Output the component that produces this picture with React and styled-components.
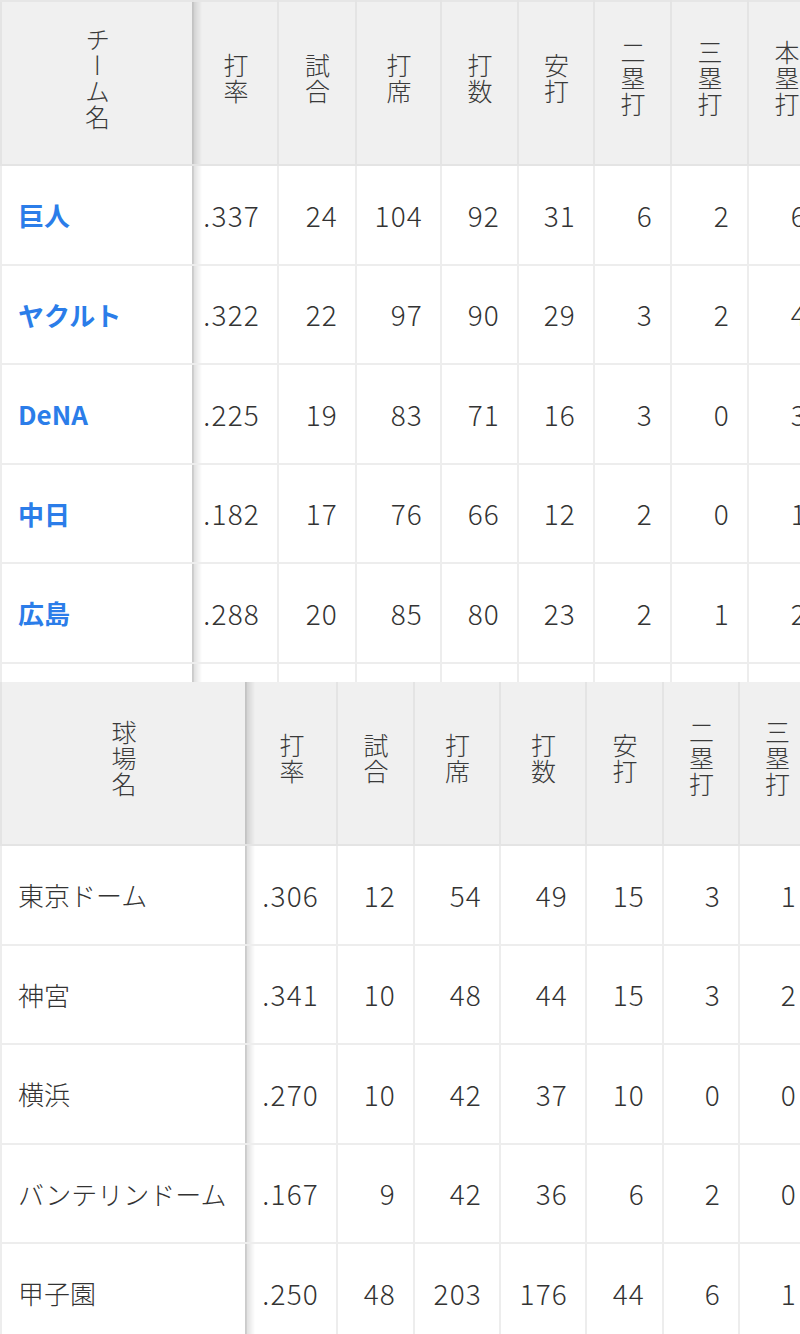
import styled, { createGlobalStyle } from 'styled-components';

const GlobalStyle = createGlobalStyle`
    html, body {
        margin: 0;
        padding: 0;
        background: #fff;
    }
    body {
        font-family: "Noto Sans CJK JP", "Noto Sans", sans-serif;
        color: #333;
    }
`

const teamCols = [192, 85, 78, 85, 77, 76, 77, 77, 77, 77, 77, 77];
const teamHeads = ['打率', '試合', '打席', '打数', '安打', '二塁打', '三塁打', '本塁打', '打点', '盗塁', '三振'];
const teamRows = [
    ['巨人', '.337', 24, 104, 92, 31, 6, 2, 6, 28, 3, 18],
    ['ヤクルト', '.322', 22, 97, 90, 29, 3, 2, 4, 20, 1, 21],
    ['DeNA', '.225', 19, 83, 71, 16, 3, 0, 3, 9, 0, 17],
    ['中日', '.182', 17, 76, 66, 12, 2, 0, 1, 6, 2, 19],
    ['広島', '.288', 20, 85, 80, 23, 2, 1, 2, 11, 1, 14],
    ['阪神', '.301', 25, 110, 93, 28, 5, 1, 3, 15, 2, 20],
];

const parkCols = [245, 91, 77, 86, 86, 77, 76, 76, 76, 76];
const parkHeads = ['打率', '試合', '打席', '打数', '安打', '二塁打', '三塁打', '本塁打', '打点'];
const parkRows = [
    ['東京ドーム', '.306', 12, 54, 49, 15, 3, 1, 4, 12],
    ['神宮', '.341', 10, 48, 44, 15, 3, 2, 3, 10],
    ['横浜', '.270', 10, 42, 37, 10, 0, 0, 2, 6],
    ['バンテリンドーム', '.167', 9, 42, 36, 6, 2, 0, 0, 3],
    ['甲子園', '.250', 48, 203, 176, 44, 6, 1, 5, 20],
];

const StatTable = ({ firstHead, heads, rows, cols, link, noTop }) => (
    <Table $noTop={noTop} style={{ width: cols.reduce((a, b) => a + b, 0) }}>
        <colgroup>
            {cols.map((w, i) => <col key={i} style={{ width: w }} />)}
        </colgroup>
        <thead>
            <tr>
                <HeadCell $sticky><Vertical>{firstHead}</Vertical></HeadCell>
                {heads.map((h) => <HeadCell key={h}><Vertical>{h}</Vertical></HeadCell>)}
            </tr>
        </thead>
        <tbody>
            {rows.map(([name, ...vals]) => (
                <tr key={name}>
                    <NameCell $link={link}>{name}</NameCell>
                    {vals.map((v, i) => <NumCell key={i}>{v}</NumCell>)}
                </tr>
            ))}
        </tbody>
    </Table>
);

const App = () => {
    return (
        <Page>
            <GlobalStyle />
            <Scroller $height={682}>
                <StatTable firstHead='チーム名' heads={teamHeads} rows={teamRows} cols={teamCols} link />
            </Scroller>
            <Scroller>
                <StatTable firstHead='球場名' heads={parkHeads} rows={parkRows} cols={parkCols} noTop />
            </Scroller>
        </Page>
    );
}

const Page = styled.div`
    width: 800px;
    display: flex;
    flex-direction: column;
`

const Scroller = styled.div`
    width: 100%;
    height: ${(p) => (p.$height ? `${p.$height}px` : 'auto')};
    overflow: auto;
    scrollbar-width: none;
    &::-webkit-scrollbar {
        display: none;
    }
`

const Table = styled.table`
    border-collapse: collapse;
    table-layout: fixed;
    font-size: 28px;
    font-weight: 300;
    color: #333;

    thead th {
        border-top: ${(p) => (p.$noTop ? 'none' : '2px solid #e6e6e6')};
    }
`

const stickyCol = `
    position: sticky;
    left: 0;
    z-index: 2;
    &::after {
        content: '';
        position: absolute;
        top: 0;
        bottom: 0;
        right: -10px;
        width: 10px;
        background: linear-gradient(to right, rgba(0, 0, 0, 0.15), rgba(0, 0, 0, 0));
        pointer-events: none;
    }
`

const HeadCell = styled.th`
    height: 162px;
    padding: 0;
    background: #f0f0f0;
    border: 2px solid #e4e4e4;
    font-weight: 400;
    text-align: center;
    vertical-align: middle;
    ${(p) => (p.$sticky ? stickyCol : '')}
`

const Vertical = styled.span`
    display: inline-block;
    writing-mode: vertical-rl;
    text-orientation: upright;
    font-size: 25px;
    font-weight: 300;
    line-height: 1;
    letter-spacing: 1px;
    color: #3a3a3a;
`

const NameCell = styled.td`
    height: 97.5px;
    padding: 0 0 0 16px;
    background: #fff;
    border: 2px solid #ededed;
    text-align: left;
    white-space: nowrap;
    font-size: 26px;
    font-weight: ${(p) => (p.$link ? 700 : 300)};
    color: ${(p) => (p.$link ? '#2b7de9' : '#333')};
    ${stickyCol}
`

const NumCell = styled.td`
    height: 97.5px;
    padding: 0 17px 0 0;
    background: #fff;
    border: 2px solid #ededed;
    text-align: right;
    white-space: nowrap;
    letter-spacing: 1.2px;
`

export default App
